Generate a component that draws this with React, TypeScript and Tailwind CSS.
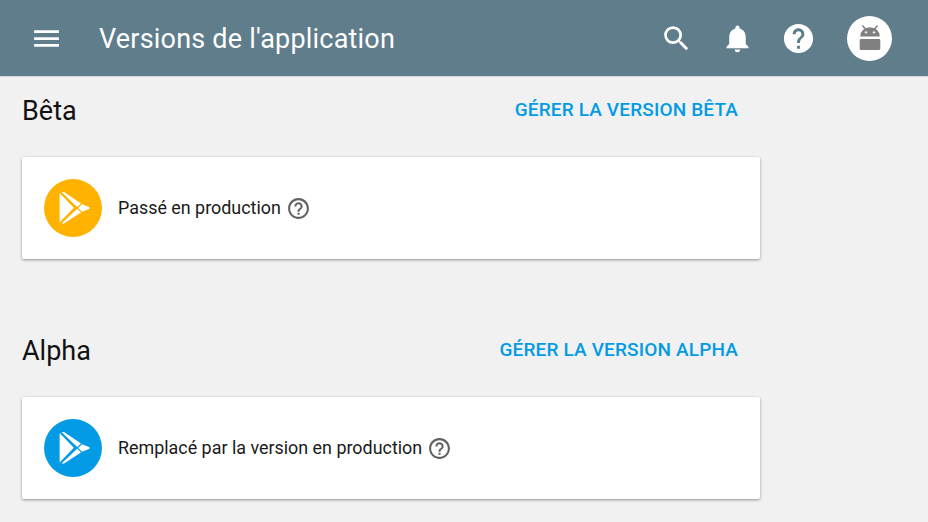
import * as React from "react";
import { MdMenu, MdSearch, MdNotifications, MdHelp, MdHelpOutline } from "react-icons/md";

function PlayLogo() {
  return (
    <svg viewBox="0 0 58 58" className="w-full h-full" fill="#fff">
      {/* big triangle */}
      <path d="M15.6 14 L15.6 43.5 L29.8 28.8 Z" />
      {/* top and bottom strips */}
      <path d="M17.5 13 L20 13 L37 24.5 L33.2 28 Z" />
      <path d="M17.5 44.5 L20 44.5 L37 33.5 L33.2 29.8 Z" />
      {/* right tip */}
      <path d="M38 25.2 L45 28 Q46.5 29 45 30 L38 32.8 L34.2 29 Z" />
    </svg>
  );
}

function AndroidLogo() {
  return (
    <svg viewBox="0 0 24 24" className="w-[26px] h-[26px]" fill="#808080">
      <path d="M3 10.5 a9 8.5 0 0 1 18 0 Z" />
      <rect x="2.5" y="13" width="19" height="10" rx="1" />
      <path d="M5 0.5 L8 4 M19 0.5 L16 4" stroke="#808080" strokeWidth="1.4" />
      <circle cx="8.3" cy="6.8" r="1.1" fill="#eee" />
      <circle cx="15.7" cy="6.8" r="1.1" fill="#eee" />
    </svg>
  );
}

function StatusCard(props: { color: string; label: string }) {
  return (
    <div className="w-[738px] h-[102px] bg-white rounded-[2px] shadow-[0_1px_3px_rgba(0,0,0,0.4)] flex items-center pl-[22px]">
      <div className={`w-[58px] h-[58px] rounded-full ${props.color}`}>
        <PlayLogo />
      </div>
      <span className="ml-[16px] text-[17.9px] leading-none text-[#1a1a1a]">{props.label}</span>
      <MdHelpOutline className="ml-[5px] w-[25px] h-[25px] text-[#616161]" />
    </div>
  );
}

function Section(props: { title: string; action: string; color: string; label: string }) {
  return (
    <section>
      <div className="h-[68px] mb-[12px] flex items-center justify-between w-[738px] pr-[22px]">
        <h2 className="text-[27px] text-[#111]">{props.title}</h2>
        <a className="text-[19px] font-medium text-[#039be5] tracking-[0.15px] mt-[-2px]">{props.action}</a>
      </div>
      <StatusCard color={props.color} label={props.label} />
    </section>
  );
}

export default function App() {
  return (
    <div className="w-[928px] h-[522px] overflow-hidden bg-[#f1f1f1] font-['Roboto',sans-serif]">
      <header className="h-[77px] bg-[#607d8b] border-b border-[#cfd8dc] flex items-center pl-[30px] pr-[36px] text-white">
        <MdMenu className="w-[33px] h-[33px]" />
        <h1 className="ml-[36px] pt-[2px] text-[27px] font-normal tracking-[0.2px] flex-1">Versions de l'application</h1>
        <MdSearch className="w-[33px] h-[33px]" />
        <MdNotifications className="ml-[28px] w-[33px] h-[33px]" />
        <MdHelp className="ml-[27px] w-[35px] h-[35px]" />
        <div className="ml-[31px] w-[45px] h-[45px] rounded-full bg-white flex items-center justify-center">
          <AndroidLogo />
        </div>
      </header>
      <main className="pl-[22px] flex flex-col gap-[58px]">
        <Section title="Bêta" action="GÉRER LA VERSION BÊTA" color="bg-[#ffb300]" label="Passé en production" />
        <Section title="Alpha" action="GÉRER LA VERSION ALPHA" color="bg-[#039be5]" label="Remplacé par la version en production" />
      </main>
    </div>
  );
}
